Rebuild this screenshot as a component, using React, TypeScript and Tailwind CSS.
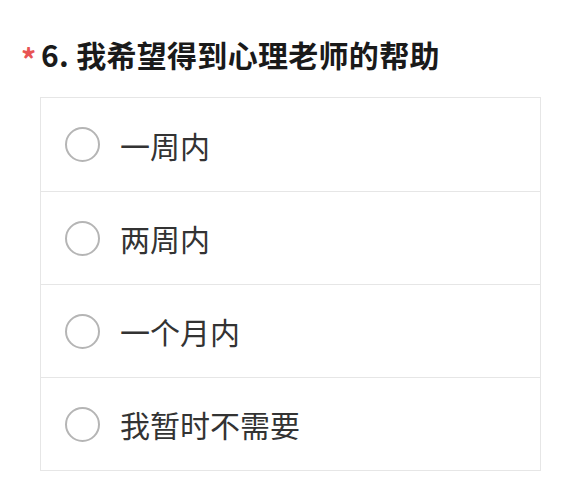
import React from "react";

const options = ["一周内", "两周内", "一个月内", "我暂时不需要"];

export default function App() {
  return (
    <div
      className="w-[580px] h-[489px] bg-white overflow-hidden"
      style={{ fontFamily: '"Noto Sans CJK SC", "Noto Sans", sans-serif' }}
    >
      <div className="flex items-center pt-[33px] pl-[21px] h-[74px]">
        <span className="text-[#e85454] text-[30px] font-bold leading-none w-[20px] mt-[8px]">*</span>
        <span className="text-[30px] font-bold text-[#1a1a1a] leading-none tracking-[0.3px]">
          6. 我希望得到心理老师的帮助
        </span>
      </div>
      <div className="ml-[40px] mt-[23px] w-[501px] border border-[#e6e6e6] flex flex-col">
        {options.map((o, i) => (
          <div
            key={o}
            className={`h-[93px] flex items-center pl-[24px] ${i > 0 ? "border-t border-[#e6e6e6]" : ""}`}
          >
            <div className="w-[35px] h-[35px] rounded-full border-2 border-[#b5b5b5] bg-white shrink-0" />
            <span className="ml-[20px] text-[30px] text-[#333333] leading-none">{o}</span>
          </div>
        ))}
      </div>
    </div>
  );
}
